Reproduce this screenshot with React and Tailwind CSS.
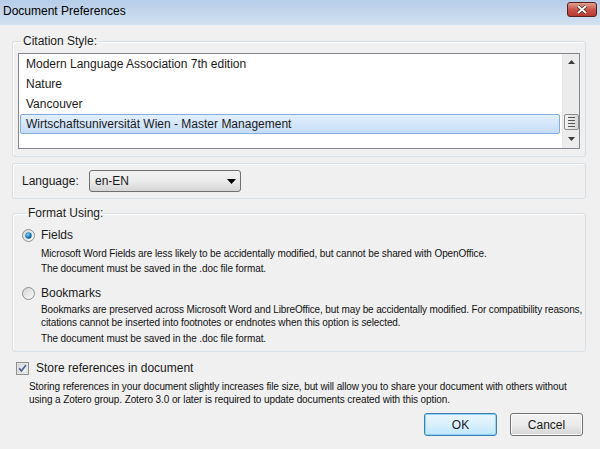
import React from "react";

const font = { fontFamily: '"Liberation Sans", Arial, sans-serif' };

function Radio({ checked }) {
  return (
    <svg width="13" height="13" viewBox="0 0 13 13" className="shrink-0">
      <defs>
        <linearGradient id={checked ? "rg1" : "rg0"} x1="0" y1="0" x2="1" y2="1">
          <stop offset="0" stopColor="#d4d4d4" />
          <stop offset="1" stopColor="#fbfbfb" />
        </linearGradient>
        <radialGradient id="dot" cx="0.4" cy="0.35" r="0.7">
          <stop offset="0" stopColor="#7fd0f5" />
          <stop offset="0.6" stopColor="#1b7fb8" />
          <stop offset="1" stopColor="#0b4c7a" />
        </radialGradient>
      </defs>
      <circle cx="6.5" cy="6.5" r="6" fill={`url(#${checked ? "rg1" : "rg0"})`} stroke="#8e8f8f" strokeWidth="1" />
      {checked && <circle cx="6.5" cy="6.5" r="3.2" fill="url(#dot)" />}
    </svg>
  );
}

function Check() {
  return (
    <svg width="13" height="13" viewBox="0 0 13 13" className="shrink-0">
      <defs>
        <linearGradient id="cb" x1="0" y1="0" x2="1" y2="1">
          <stop offset="0" stopColor="#dcdcdc" />
          <stop offset="1" stopColor="#f7f7f7" />
        </linearGradient>
      </defs>
      <rect x="0.5" y="0.5" width="12" height="12" fill="#f4f4f4" stroke="#8e8f8f" />
      <rect x="2" y="2" width="9" height="9" fill="url(#cb)" stroke="#c4c4c4" strokeWidth="0.6" />
      <path d="M3.2 6.4 L5.4 9 L9.8 3.2" fill="none" stroke="#4a5f97" strokeWidth="1.7" />
    </svg>
  );
}

const small = "text-[10px] tracking-[-0.1px] text-[#111]";

export default function App() {
  return (
    <div className="w-[600px] h-[449px] bg-[#f0f0f0] text-[#1a1a1a] overflow-hidden flex flex-col" style={font}>
      {/* Title bar */}
      <div className="h-[25px] shrink-0 flex items-start justify-between bg-gradient-to-b from-[#b6cde8] to-[#d2e1f1] pl-[3px] pr-[3px]">
        <span className="text-[12px] leading-[14px] mt-[4px] text-black">Document Preferences</span>
        <div className="w-[30px] h-[15px] mt-[2px] rounded-[3px] border border-[#5a2020] bg-gradient-to-b from-[#e0a090] via-[#c8544a] to-[#b53a30] flex items-center justify-center">
          <svg width="12" height="9" viewBox="0 0 12 9">
            <path d="M2 1 L10 8 M10 1 L2 8" stroke="#4a2020" strokeWidth="3.2" />
            <path d="M2 1 L10 8 M10 1 L2 8" stroke="#ffffff" strokeWidth="1.8" />
          </svg>
        </div>
      </div>

      <div className="flex flex-col pl-[12px] pr-[14px] pt-[9px]">
        {/* Citation Style */}
        <fieldset className="min-w-0 border border-[#d5dfe5] rounded-[3px] px-[5px] pb-[7px] shadow-[inset_1px_1px_0_#ffffff]">
          <legend className="text-[12px] ml-[3px] px-[2px] leading-[14px]">Citation Style:</legend>
          <div className="mt-[5px] h-[96px] border border-[#828790] bg-white flex">
            <div className="flex-1 flex flex-col pl-[1px] pr-[2px] text-[12px]">
              <div className="h-[20px] flex items-center pl-[6px]">Modern Language Association 7th edition</div>
              <div className="h-[20px] flex items-center pl-[6px]">Nature</div>
              <div className="h-[20px] flex items-center pl-[6px]">Vancouver</div>
              <div className="h-[20px] flex items-center pl-[5px] border border-[#84acdd] rounded-[2px] bg-gradient-to-b from-[#e3effd] to-[#c6ddf8]">
                Wirtschaftsuniversität Wien - Master Management
              </div>
            </div>
            <div className="w-[17px] bg-[#ececec] border-l border-[#e6e6e6] flex flex-col items-center">
              <svg width="17" height="17" viewBox="0 0 17 17"><path d="M5 10 L8.5 6 L12 10 Z" fill="#3c3c3c" /></svg>
              <div className="mt-[43px] w-[15px] h-[16px] border border-[#8b8b8b] rounded-[2px] bg-gradient-to-r from-[#f4f4f4] to-[#d8d8d8] flex flex-col items-center justify-center gap-[2px]">
                <div className="w-[7px] h-[1px] bg-[#555]" />
                <div className="w-[7px] h-[1px] bg-[#555]" />
                <div className="w-[7px] h-[1px] bg-[#555]" />
                <div className="w-[7px] h-[1px] bg-[#555]" />
              </div>
              <svg width="17" height="17" viewBox="0 0 17 17"><path d="M5 7 L8.5 11 L12 7 Z" fill="#3c3c3c" /></svg>
            </div>
          </div>
        </fieldset>

        {/* Language */}
        <div className="mt-[6px] h-[36px] border border-[#d5dfe5] rounded-[3px] flex items-center pl-[9px] shadow-[inset_1px_1px_0_#ffffff]">
          <span className="text-[12px] w-[67px]">Language:</span>
          <div className="w-[152px] h-[22px] border border-[#707070] rounded-[3px] bg-gradient-to-b from-[#f2f2f2] via-[#ebebeb] to-[#d5d5d5] flex items-center justify-between pl-[5px] pr-[4px]">
            <span className="text-[12px]">en-EN</span>
            <svg width="9" height="5" viewBox="0 0 9 5"><path d="M0 0 L9 0 L4.5 5 Z" fill="#000" /></svg>
          </div>
        </div>

        {/* Format Using */}
        <fieldset className="min-w-0 mt-[7px] border border-[#d5dfe5] rounded-[3px] pl-[9px] pr-[2px] pb-[6px] shadow-[inset_1px_1px_0_#ffffff]">
          <legend className="text-[12px] ml-[5px] px-[1px] leading-[14px]">Format Using:</legend>
          <div className="flex items-center gap-[6px] mt-[8px] h-[14px]">
            <Radio checked />
            <span className="text-[12px] leading-[14px]">Fields</span>
          </div>
          <div className={`pl-[19px] ${small} leading-[15px] mt-[4px]`}>
            <div>Microsoft Word Fields are less likely to be accidentally modified, but cannot be shared with OpenOffice.</div>
            <div>The document must be saved in the .doc file format.</div>
          </div>
          <div className="flex items-center gap-[6px] mt-[10px] h-[14px]">
            <Radio />
            <span className="text-[12px] leading-[14px]">Bookmarks</span>
          </div>
          <div className={`pl-[19px] ${small} leading-[13px] mt-[3px]`}>
            <div className="whitespace-nowrap tracking-[-0.13px]">Bookmarks are preserved across Microsoft Word and LibreOffice, but may be accidentally modified. For compatibility reasons,</div>
            <div>citations cannot be inserted into footnotes or endnotes when this option is selected.</div>
            <div className="mt-[3px]">The document must be saved in the .doc file format.</div>
          </div>
        </fieldset>

        {/* Store references */}
        <div className="flex items-center gap-[7px] mt-[9px] pl-[4px] h-[14px]">
          <Check />
          <span className="text-[12px] leading-[14px]">Store references in document</span>
        </div>
        <div className={`pl-[17px] ${small} leading-[13px] mt-[5px]`}>
          <div className="whitespace-nowrap">Storing references in your document slightly increases file size, but will allow you to share your document with others without</div>
          <div>using a Zotero group. Zotero 3.0 or later is required to update documents created with this option.</div>
        </div>

        {/* Buttons */}
        <div className="flex justify-end gap-[13px] mt-[7px] pr-[3px]">
          <div className="w-[73px] h-[23px] rounded-[3px] border border-[#3c7fb1] bg-gradient-to-b from-[#eaf6fd] via-[#d9f0fc] to-[#bee6fd] shadow-[inset_0_0_0_1px_#8fd3f7] flex items-center justify-center text-[12px]">OK</div>
          <div className="w-[73px] h-[23px] rounded-[3px] border border-[#707070] bg-gradient-to-b from-[#f2f2f2] via-[#ebebeb] to-[#d5d5d5] shadow-[inset_0_0_0_1px_#fcfcfc] flex items-center justify-center text-[12px]">Cancel</div>
        </div>
      </div>
    </div>
  );
}
